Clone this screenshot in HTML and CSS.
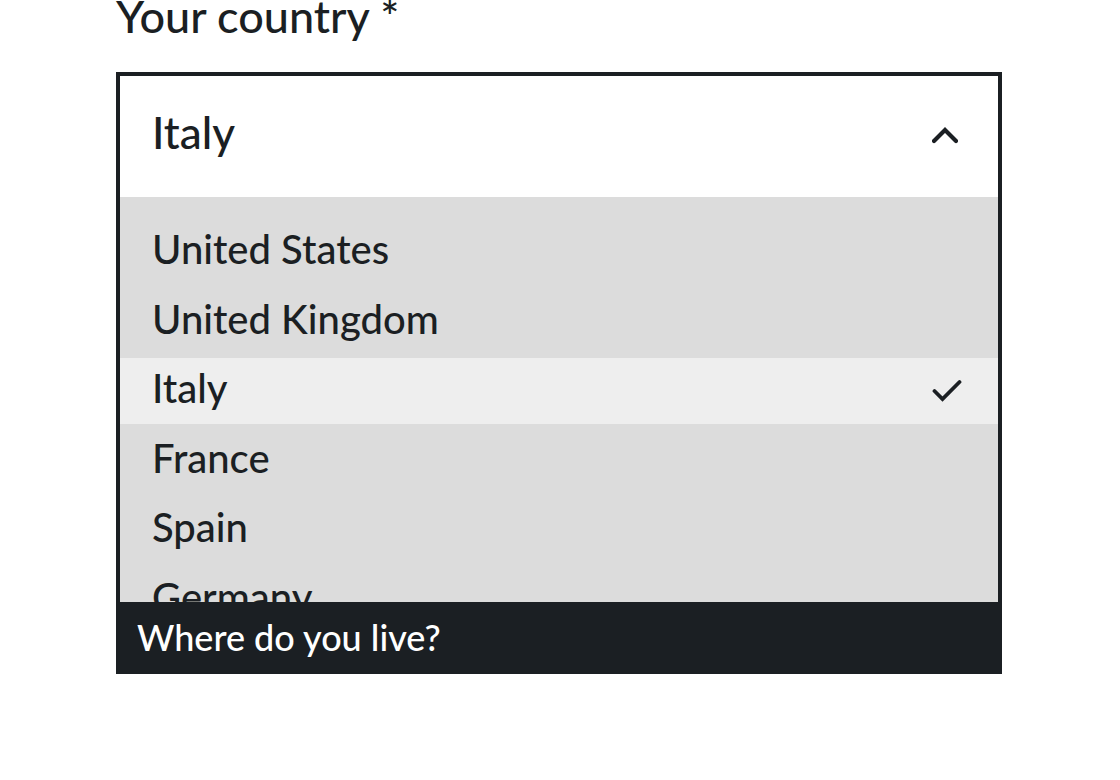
FILE: index.html
```html
<!DOCTYPE html>
<html>
<head>
<meta charset="utf-8">
<link rel="stylesheet" href="styles.css">
</head>
<body>
<div class="page">
  <div class="label">Your country *</div>
  <div class="field">
    <div class="field-head">
      <span class="value">Italy</span>
      <svg class="chev" width="26" height="18" viewBox="0 0 26 18"><polyline points="2,15 13,4 24,15" fill="none" stroke="#1b1f23" stroke-width="4.2" stroke-linecap="round" stroke-linejoin="miter"/></svg>
    </div>
    <ul class="list">
      <li class="opt">United States</li>
      <li class="opt">United Kingdom</li>
      <li class="opt selected">Italy<svg class="check" width="30" height="24" viewBox="0 0 30 24"><polyline points="2.5,12 10.5,20 27.5,3" fill="none" stroke="#1b1f23" stroke-width="3.8" stroke-linecap="round" stroke-linejoin="miter"/></svg></li>
      <li class="opt">France</li>
      <li class="opt">Spain</li>
      <li class="opt">Germany</li>
      <li class="opt">Canada</li>
    </ul>
  </div>
  <div class="hint">Where do you live?</div>
</div>
</body>
</html>
```
FILE: styles.css
```css
html, body {
  margin: 0;
  padding: 0;
  background: #ffffff;
}
body {
  font-family: Lato, "Noto Sans", sans-serif;
  font-weight: 500;
  color: #1b1f23;
}
.page {
  width: 886px;
  margin-left: 116px;
}
.label {
  font-size: 45px;
  line-height: 50px;
  margin-top: -9px;
  height: 81px;
}
.field {
  border: 4px solid #1b1f23;
  border-bottom: none;
}
.field-head {
  height: 121px;
  background: #fff;
  display: flex;
  align-items: center;
  justify-content: space-between;
  padding: 0 40px 0 32px;
}
.value {
  font-size: 44px;
  line-height: 1;
  margin-bottom: 9px;
}
.chev {
  display: block;
  margin-bottom: 4px;
}
.list {
  list-style: none;
  margin: 0;
  padding: 22px 0 0 0;
  background: #dcdcdc;
  height: 383px;
  overflow: hidden;
  display: flex;
  flex-direction: column;
  gap: 3.5px;
}
.opt {
  flex: 0 0 66px;
  height: 66px;
  display: flex;
  align-items: center;
  justify-content: space-between;
  padding: 0 36px 6px 32px;
  box-sizing: border-box;
  font-size: 40px;
  line-height: 1;
}
.opt.selected {
  background: #eeeeee;
}
.check {
  display: block;
  margin-top: 6px;
}
.hint {
  height: 72px;
  background: #1b1f23;
  color: #ffffff;
  font-size: 36px;
  display: flex;
  align-items: center;
  padding-left: 21px;
  padding-bottom: 2px;
  box-sizing: border-box;
}
```
